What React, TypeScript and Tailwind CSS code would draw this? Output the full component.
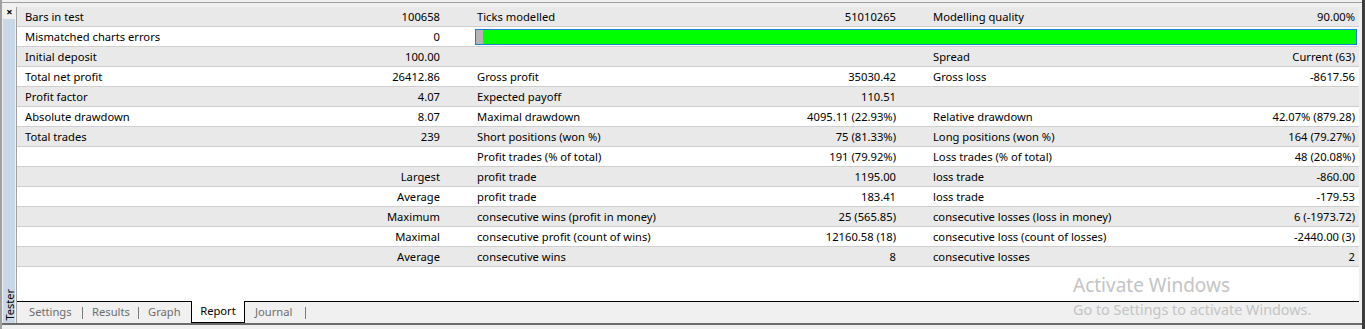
import React from "react";

type Row = [string, string, string, string, string, string];

const rows: Row[] = [
  ["Bars in test", "100658", "Ticks modelled", "51010265", "Modelling quality", "90.00%"],
  ["Mismatched charts errors", "0", "", "", "", ""],
  ["Initial deposit", "100.00", "", "", "Spread", "Current (63)"],
  ["Total net profit", "26412.86", "Gross profit", "35030.42", "Gross loss", "-8617.56"],
  ["Profit factor", "4.07", "Expected payoff", "110.51", "", ""],
  ["Absolute drawdown", "8.07", "Maximal drawdown", "4095.11 (22.93%)", "Relative drawdown", "42.07% (879.28)"],
  ["Total trades", "239", "Short positions (won %)", "75 (81.33%)", "Long positions (won %)", "164 (79.27%)"],
  ["", "", "Profit trades (% of total)", "191 (79.92%)", "Loss trades (% of total)", "48 (20.08%)"],
  ["", "Largest", "profit trade", "1195.00", "loss trade", "-860.00"],
  ["", "Average", "profit trade", "183.41", "loss trade", "-179.53"],
  ["", "Maximum", "consecutive wins (profit in money)", "25 (565.85)", "consecutive losses (loss in money)", "6 (-1973.72)"],
  ["", "Maximal", "consecutive profit (count of wins)", "12160.58 (18)", "consecutive loss (count of losses)", "-2440.00 (3)"],
  ["", "Average", "consecutive wins", "8", "consecutive losses", "2"],
];

const ReportRow = ({ row, index }: { row: Row; index: number }) => {
  const bg = index % 2 === 0 ? "bg-[#e9e9e9]" : "bg-white";
  if (index === 1) {
    return (
      <div className={`grid h-[20px] grid-cols-[208px_215px_1fr] items-start border-b border-[#cfcfcf] ${bg}`}>
        <div className="pl-2 leading-[19px]">{row[0]}</div>
        <div className="text-right leading-[19px]">{row[1]}</div>
        <div className="pl-[35px] pr-[2px] pt-[2px]">
          <div className="flex h-[16px] border border-[#1a7fd4]">
            <div className="w-[7px] bg-[#b4b4b4]" />
            <div className="flex-1 bg-[#00ff00]" />
          </div>
        </div>
      </div>
    );
  }
  return (
    <div
      className={`grid h-[20px] grid-cols-[208px_215px_220px_236px_224px_1fr] border-b border-[#cfcfcf] leading-[19px] ${bg}`}
    >
      <div className="pl-2 whitespace-nowrap">{row[0]}</div>
      <div className="text-right whitespace-nowrap">{row[1]}</div>
      <div className="pl-[37px] whitespace-nowrap">{row[2]}</div>
      <div className="text-right whitespace-nowrap">{row[3]}</div>
      <div className="pl-[37px] whitespace-nowrap">{row[4]}</div>
      <div className="pr-[4px] text-right whitespace-nowrap">{row[5]}</div>
    </div>
  );
};

const Sep = () => <span className="h-[12px] w-px bg-[#7a7a7a]" />;

export default function App() {
  return (
    <div
      className="relative flex h-[329px] w-[1365px] flex-col overflow-hidden border-l-2 border-r-[3px] border-l-[#a0a0a0] border-r-[#3c3c3c] bg-[#f0f0f0] text-[11.2px] text-black"
      style={{ fontFamily: '"Noto Sans", "Open Sans", sans-serif' }}
    >
      <div className="h-[2px]" />
      <div className="flex flex-1 border-t border-[#a0a0a0]">
        {/* side strip */}
        <div className="flex w-[14px] flex-col">
          <div className="flex h-[16px] items-center justify-center pl-[1px] text-[11px] font-bold leading-none">×</div>
          <div className="ml-[1px] flex w-[12px] flex-1 items-end justify-center bg-[#cad7e6] pb-[2px]">
            <span className="rotate-180 text-[11px] leading-none [writing-mode:vertical-rl]">Tester</span>
          </div>
        </div>

        {/* main */}
        <div className="flex flex-1 flex-col pr-[3px] pt-[4px]">
          <div className="flex flex-1 flex-col border-l border-[#a0a0a0] bg-white">
            {rows.map((r, i) => (
              <ReportRow key={i} row={r} index={i} />
            ))}
            <div className="flex-1" />
            <div className="flex h-[22px] items-stretch border-t border-black bg-[#f0f0f0] text-[#6d6d6d]">
              <div className="flex w-[65px] items-center pl-[12px]">Settings</div>
              <div className="flex items-center"><Sep /></div>
              <div className="flex w-[55px] items-center pl-[9px]">Results</div>
              <div className="flex items-center"><Sep /></div>
              <div className="flex w-[52px] items-center pl-[9px]">Graph</div>
              <div className="-mt-px flex w-[54px] items-center justify-center border-x border-b border-black bg-white text-black">
                Report
              </div>
              <div className="flex w-[60px] items-center pl-[10px]">Journal</div>
              <div className="flex items-center"><Sep /></div>
            </div>
          </div>
        </div>
      </div>
      <div className="h-[6px] border-t-2 border-[#6b6b6b]" />

      {/* windows watermark */}
      <div className="pointer-events-none absolute left-[1071px] top-[272px] text-[#c4c4c4]">
        <div className="text-[19px] leading-[26px]">Activate Windows</div>
        <div className="text-[14.4px] leading-[24px]">Go to Settings to activate Windows.</div>
      </div>
    </div>
  );
}
